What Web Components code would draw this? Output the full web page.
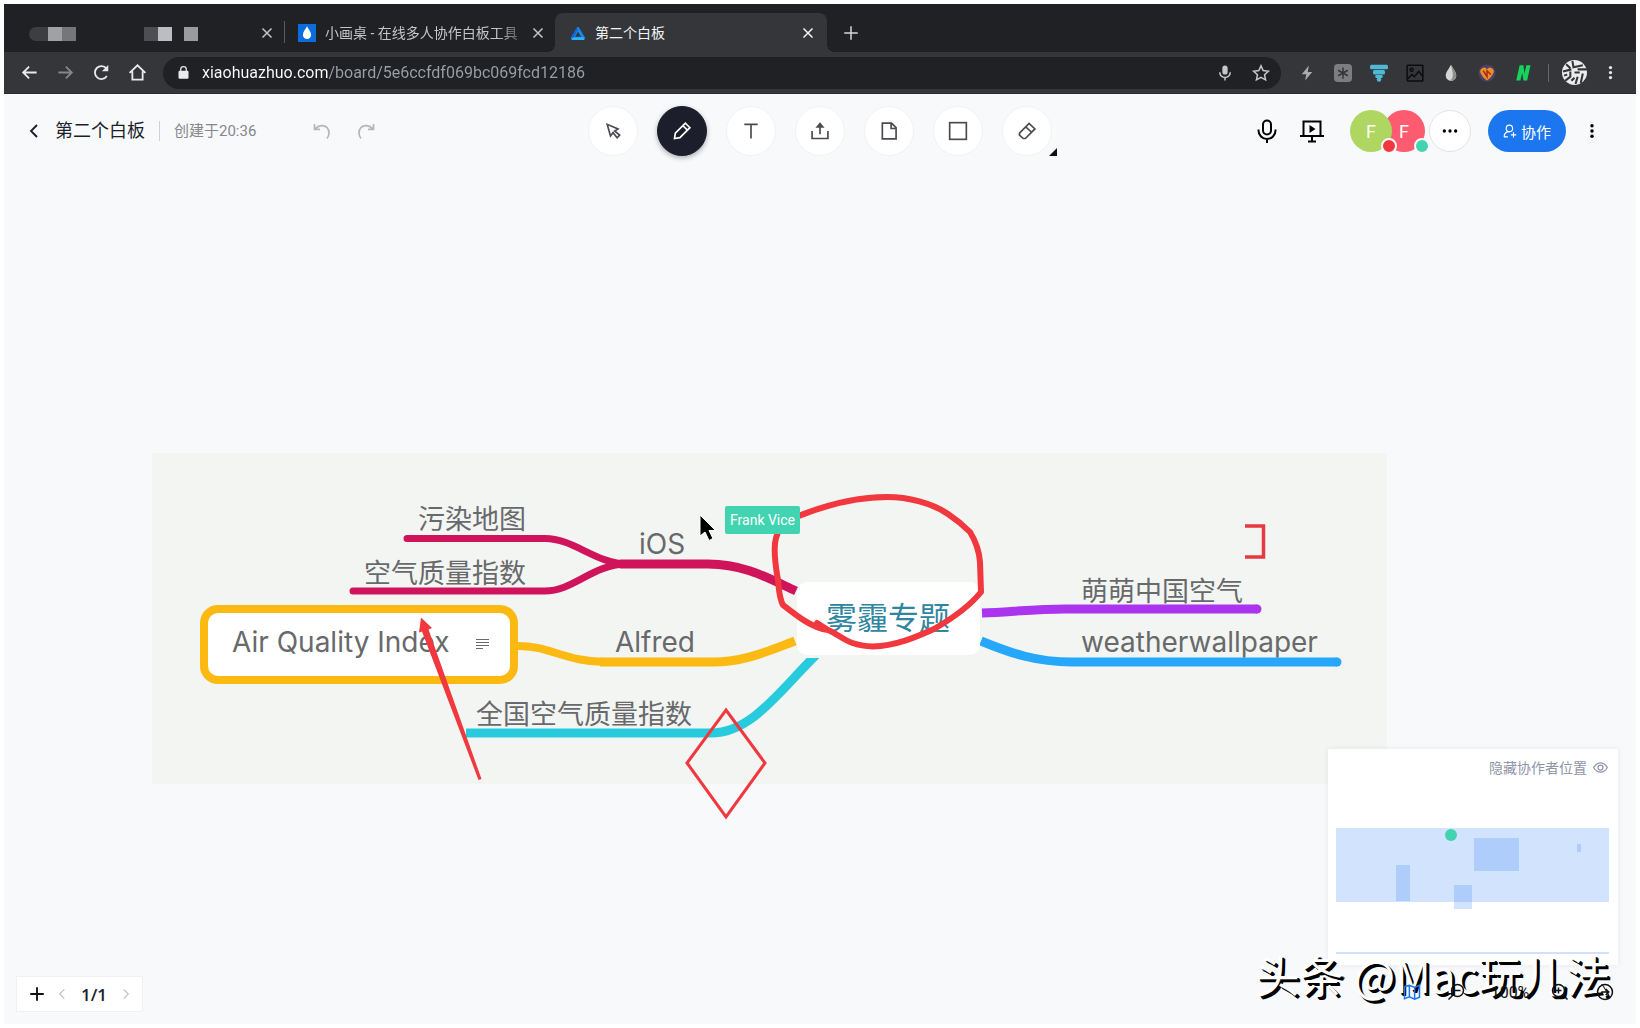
<!DOCTYPE html>
<html lang="zh-CN">
<head>
<meta charset="utf-8">
<title>第二个白板</title>
<style>
  html, body { margin: 0; background: #fff; }
  body { font-family: Roboto, "Noto Sans CJK SC", sans-serif; color: #1c1f2b; }
</style>
</head>
<body>
<browser-window></browser-window>

<script>
const RESET = `
  :host, *, *::before, *::after { box-sizing: border-box; }
  button { font: inherit; color: inherit; background: none; border: 0; padding: 0; margin: 0;
    display: inline-flex; align-items: center; justify-content: center; cursor: pointer; }
`;

function define(name, html, setup) {
  const template = document.createElement('template');
  template.innerHTML = html;
  customElements.define(name, class extends HTMLElement {
    connectedCallback() {
      if (this.shadowRoot) return;
      const root = this.attachShadow({ mode: 'open' });
      root.append(template.content.cloneNode(true));
      if (setup) setup(this, root);
    }
  });
}

/* Icons: 24-unit box, stroked with currentColor unless a shape says otherwise */
const ICONS = {
  close: '<path d="M6 6l12 12M18 6L6 18"/>',
  plus: '<path d="M12 3v18M3 12h18"/>',
  back: '<path d="M21 12H4M11.500 4.500L4 12l7.500 7.500"/>',
  forward: '<path d="M3 12h17M12.500 4.500L20 12l-7.500 7.500"/>',
  reload: '<path d="M18.800 16.500a8.200 8.200 0 1 1-.6-9.700"/><path d="M20.500 2.500v8h-8z" fill="currentColor" stroke="none"/>',
  home: '<path d="M2 12.500L12 3l10 9.500M5.500 10.500V21h13V10.500"/>',
  lock: '<rect x="4" y="9" width="16" height="13" rx="2" fill="currentColor" stroke="none"/><path d="M7.500 10V7a4.500 4.500 0 0 1 9 0v3"/>',
  micsmall: '<rect x="8.500" y="2" width="7" height="12" rx="3.500" fill="currentColor" stroke="none"/><path d="M5 11a7 7 0 0 0 14 0M12 18v4"/>',
  star: '<path d="M12 2.500l2.900 6.300 6.900.8-5.100 4.700 1.400 6.800-6.100-3.400-6.100 3.400 1.400-6.800-5.100-4.700 6.900-.8z"/>',
  bolt: '<path d="M14.500 2L5 13.500h6L9.500 22 19 10.500h-6z" fill="currentColor" stroke="none"/>',
  asterisk: '<rect width="24" height="24" rx="5" fill="#7d7d7f" stroke="none"/><path d="M12 4.500v15M5.500 8.300l13 7.400M18.500 8.300l-13 7.400" stroke="#35363a"/>',
  funnel: '<g stroke="none" fill="#4fb9d3"><rect x="0" y="1" width="24" height="6" rx="2"/><rect x="4" y="8" width="16" height="6" rx="2"/><rect x="7" y="14.500" width="10" height="4" rx="1.500"/><circle cx="12" cy="20.500" r="3"/></g>',
  picture: '<g stroke="#0c0c0d"><rect x="1.500" y="1.500" width="21" height="21" rx="1"/><circle cx="7.500" cy="7.500" r="2"/><path d="M2 20l6-6 3 3 6-7 5 6"/></g>',
  drop: '<path d="M12 1c3 6 7 9.500 7 14.500a7 7 0 0 1-14 0C5 10.500 9 7 12 1z" fill="#d4d4d4" stroke="none"/><path d="M12 1c3 6 7 9.500 7 14.500a7 7 0 0 1-9 6.600c6-2 5-9 2-21.100z" fill="#8d8d8d" stroke="none"/>',
  gem: '<circle cx="12" cy="12" r="11.500" fill="#49406b" stroke="none"/><path d="M7 5q3-1 5 2 2-3 5-2 5 2 4 6-2 6-9 11Q5 17 3 11 2 7 7 5z" fill="#f08a2c" stroke="none"/><path d="M7 9l5 8V9l5 5" stroke="#9c3210"/>',
  letter: '<path d="M3 22L7.500 1.500h5l1.500 11 2.500-11H22L17.500 22h-5L11 11.500 8.500 22z" fill="#17d35b" stroke="none"/>',
  face: '<circle cx="12" cy="12" r="12" fill="#ececec" stroke="none"/><g stroke="#35363a" stroke-width="2"><path d="M4 4l4 4M1 11l8-2M10 1l1 6 9-2M15 9h9M8 11v5l-5 4M2 15l3-1M12 12h5M20 13l-2 9M15 16l-2 7M9 20l3-3"/></g>',
  kebab: '<g fill="currentColor" stroke="none"><circle cx="12" cy="4" r="2.600"/><circle cx="12" cy="12" r="2.600"/><circle cx="12" cy="20" r="2.600"/></g>',
  ellipsis: '<g fill="currentColor" stroke="none"><circle cx="3.500" cy="12" r="2.500"/><circle cx="12" cy="12" r="2.500"/><circle cx="20.500" cy="12" r="2.500"/></g>',
  dropapp: '<rect width="24" height="24" fill="#0b6ddb" stroke="none"/><path d="M12 3c2 4 5.500 7.500 5.500 11.500a5.500 5.500 0 0 1-11 0C6.500 10.500 10 7 12 3z" fill="#fff" stroke="none"/>',
  delta: '<path d="M12 5.500L3.500 20h17z" stroke="#1787ee" stroke-width="4.500" stroke-linejoin="round"/><path d="M3 20.500h18" stroke="#28b5f0" stroke-width="4"/><path d="M10.500 5.500L3 19" stroke="#155ed8" stroke-width="3"/>',
  chevleft: '<path d="M16 4l-8 8 8 8"/>',
  chevright: '<path d="M8 4l8 8-8 8"/>',
  undo: '<path d="M3 3.500v6.500h6.500M3.500 9.500c5-5 11-5 14.500-1.500 3.500 3.500 3 9 0 13"/>',
  redo: '<path d="M21 3.500v6.500h-6.500M20.500 9.500c-5-5-11-5-14.500-1.500C2.500 11.500 3 17 6 21"/>',
  pointer: '<path d="M5 4l4 14 3-4 5 6 3-3-6-5 4-2.500z"/>',
  pencil: '<path d="M3 21l1-6.500L16 2.500l5.500 5.500-12 12zM13 5.500l5.500 5.500"/>',
  text: '<path d="M4 4h16M12 4v17"/>',
  upload: '<path d="M2.500 12v9h19v-9M12 16V5"/><path d="M12 1.500l5.500 6.500h-11z" fill="currentColor" stroke="none"/>',
  file: '<path d="M4 2.500h11l5.500 5.500v13.500H4zM14.500 3v6h6"/>',
  square: '<rect x="2" y="2" width="20" height="20"/>',
  eraser: '<path d="M3 14.500L14.500 3l7 6.500L10 21H7.500L3 17zM10.500 7l7 6.500"/>',
  mic: '<rect x="8" y="1.500" width="8" height="14" rx="4"/><path d="M3.500 10.500v1a8.500 8.500 0 0 0 17 0v-1M12 20v4"/>',
  present: '<path d="M3.500 17V2.500h17V17M0 17h24M12 17v5M8 22.500h8"/><path d="M9.500 6v8l6-4z" fill="currentColor" stroke="none"/>',
  person: '<circle cx="11" cy="7.500" r="5.500"/><path d="M2 22c0-6 4-9 9-9M18 14v9M13.500 18.500h9M1.500 22h7"/>',
  eye: '<path d="M1 12c3-5 7-7.500 11-7.500S20 7 23 12c-3 5-7 7.500-11 7.500S4 17 1 12z"/><circle cx="12" cy="12" r="4"/>',
  map: '<path d="M2 5l6.500-2 7 3L22 3v16l-6.500 2.500-7-3L2 21zM8.500 3v15.500M15.500 6v15"/>',
  zoomout: '<circle cx="14" cy="10" r="8"/><path d="M8 16l-6 6M10 10h8"/>',
  zoomin: '<circle cx="10" cy="10" r="8"/><path d="M16 16l6 6M6 10h8M10 6v8"/>',
  help: '<circle cx="12" cy="12" r="10"/><path d="M7 12h10M13 8l4 4-4 4"/>'
};

define('ui-icon', `
  <style>
    :host { display: inline-flex; flex: none; width: var(--size, 16px); height: var(--size, 16px); }
    svg { width: 100%; height: 100%; overflow: visible; fill: none; stroke: currentColor;
      stroke-width: var(--weight, 2); }
  </style>
  <svg viewBox="0 0 24 24" aria-hidden="true"></svg>`,
  (host, root) => { root.querySelector('svg').innerHTML = ICONS[host.getAttribute('name')] || ''; });

/* Browser chrome */
define('browser-tab', `
  <style>${RESET}
    :host { display: flex; align-items: center; gap: 9px; height: 39px; padding: 0 8px 0 13px;
      font-size: 14px; color: #c3c5c9; position: relative; }
    :host([active]) { background: #35363a; color: #f1f3f4; border-radius: 8px 8px 0 0; padding: 0 10px 0 15px; }
    :host([active])::before, :host([active])::after { content: ""; position: absolute; bottom: 0; width: 8px; height: 8px; }
    :host([active])::before { left: -8px; background: radial-gradient(circle at 0 0, transparent 8px, #35363a 8px); }
    :host([active])::after { right: -8px; background: radial-gradient(circle at 100% 0, transparent 8px, #35363a 8px); }
    :host([faded]) .label { mask-image: linear-gradient(90deg, #000 88%, rgba(0,0,0,.35)); }
    .label { flex: 1; white-space: nowrap; overflow: hidden; line-height: 20px; }
    button { width: 18px; height: 18px; }
    button ui-icon { --size: 18px; }
  </style>
  <slot name="icon"></slot>
  <span class="label"><slot></slot></span>
  <button aria-label="关闭标签页"><ui-icon name="close"></ui-icon></button>`);

define('tab-strip', `
  <style>${RESET}
    :host { display: flex; align-items: flex-end; height: 48px; background: #202124; }
    .first { width: 280px; }
    .second { width: 270px; }
    .third { width: 272px; }
    .rule { width: 1px; height: 22px; background: #5a5b5f; margin-bottom: 9px; }
    .mosaic { display: flex; height: 16px; padding: 2px 0 0 12px; }
    .mosaic i { width: 14px; }
    .mosaic .gap { width: 12px; }
    .new { width: 48px; height: 39px; color: #d5d6d9; }
    .new ui-icon { --size: 18px; }
    .app { --size: 18px; }
    .delta { --size: 16px; }
  </style>
  <browser-tab class="first">
    <span class="mosaic" aria-hidden="true">
      <i style="background:#3d3e42;border-radius:7px 0 0 7px;width:19px"></i><i style="background:#a0a1a5"></i><i style="background:#75767a"></i><i style="width:68px"></i><i style="background:#4d4e52"></i><i style="background:#bcbdc2"></i><i class="gap"></i><i style="background:#9a9b9f"></i>
    </span>
  </browser-tab>
  <span class="rule"></span>
  <browser-tab class="second" faded><ui-icon slot="icon" class="app" name="dropapp"></ui-icon>小画桌 - 在线多人协作白板工具</browser-tab>
  <browser-tab class="third" active><ui-icon slot="icon" class="delta" name="delta"></ui-icon>第二个白板</browser-tab>
  <button class="new" aria-label="新标签页"><ui-icon name="plus"></ui-icon></button>`);

define('address-bar', `
  <style>${RESET}
    :host { display: flex; align-items: center; height: 42px; padding: 0 8px 0 7px; background: #35363a;
      color: #e8eaed; border-bottom: 1px solid #2b2c2f; }
    .nav button { width: 36px; height: 36px; }
    .nav { display: flex; --size: 19px; --weight: 2.3; }
    .off { color: #85868a; }
    .box { flex: 1; display: flex; align-items: center; gap: 11px; height: 32px; margin-left: 8px; padding: 0 8px 0 13px;
      border-radius: 16px; background: #202124; }
    .box ui-icon { --size: 15px; }
    .box button ui-icon { --size: 18px; }
    .box button { width: 25px; color: #c6c7ca; }
    input { flex: 1; min-width: 0; border: 0; padding: 0; outline: 0; font: 16px/24px Roboto, sans-serif;
      color: transparent; background: linear-gradient(90deg, #fff 126px, #9aa0a6 126px);
      -webkit-background-clip: text; background-clip: text; }
    .ext { display: flex; align-items: center; margin-left: 8px; --size: 18px; color: #a9aaad; }
    .ext button { width: 36px; height: 32px; }
    .ext .rule { width: 1px; height: 18px; margin: 0 7px; background: #66676b; }
    .ext .me { --size: 25px; }
    .ext .more { color: #e8eaed; --size: 15px; }
  </style>
  <div class="nav">
    <button aria-label="后退"><ui-icon name="back"></ui-icon></button>
    <button aria-label="前进" class="off"><ui-icon name="forward"></ui-icon></button>
    <button aria-label="刷新"><ui-icon name="reload"></ui-icon></button>
    <button aria-label="主页"><ui-icon name="home"></ui-icon></button>
  </div>
  <div class="box">
    <ui-icon name="lock"></ui-icon>
    <input aria-label="地址" value="xiaohuazhuo.com/board/5e6ccfdf069bc069fcd12186">
    <button aria-label="麦克风"><ui-icon name="micsmall"></ui-icon></button>
    <button aria-label="收藏"><ui-icon name="star"></ui-icon></button>
  </div>
  <div class="ext">
    <button aria-label="闪电"><ui-icon name="bolt"></ui-icon></button>
    <button aria-label="星号"><ui-icon name="asterisk"></ui-icon></button>
    <button aria-label="漏斗"><ui-icon name="funnel"></ui-icon></button>
    <button aria-label="图片"><ui-icon name="picture"></ui-icon></button>
    <button aria-label="水滴"><ui-icon name="drop"></ui-icon></button>
    <button aria-label="宝石"><ui-icon name="gem"></ui-icon></button>
    <button aria-label="笔记"><ui-icon name="letter"></ui-icon></button>
    <span class="rule"></span>
    <button aria-label="账户" class="me"><ui-icon name="face"></ui-icon></button>
    <button aria-label="菜单" class="more"><ui-icon name="kebab"></ui-icon></button>
  </div>`);

/* Whiteboard header */
define('tool-button', `
  <style>${RESET}
    :host { display: block; }
    button { width: 50px; height: 50px; border-radius: 50%; background: #fff; border: 1px solid #f1f2f4; color: #4a4b50; }
    :host([active]) button { background: #1c1f2b; border-color: #1c1f2b; color: #fff; box-shadow: 0 2px 5px rgba(28,31,43,.35); }
  </style>
  <button><ui-icon></ui-icon></button>`,
  (host, root) => {
    root.querySelector('button').setAttribute('aria-label', host.getAttribute('label'));
    const old = root.querySelector('ui-icon'), icon = document.createElement('ui-icon');
    icon.setAttribute('name', host.getAttribute('icon'));
    old.replaceWith(icon);
  });

define('user-avatar', `
  <style>
    :host { display: flex; align-items: center; justify-content: center; width: 42px; height: 42px; border-radius: 50%;
      background: var(--fill); color: #fff; font-size: 18px; position: relative; }
    i { position: absolute; right: -5px; bottom: -2px; width: 12px; height: 12px; border: 2px solid #f8f9fb;
      border-radius: 50%; background: var(--dot); }
  </style>
  <slot></slot><i></i>`);

define('board-header', `
  <style>${RESET}
    :host { display: grid; grid-template-columns: 1fr auto 1fr; align-items: center; height: 74px;
      padding: 0 36px 0 20px; position: relative; z-index: 2; }
    .left, .tools, .right { display: flex; align-items: center; }
    .left button { height: 32px; }
    .chev { width: 20px; margin-right: 11px; --size: 18px; --weight: 2.5; }
    h1 { margin: 0; font-size: 18px; font-weight: 400; line-height: 26px; }
    .rule { width: 1px; height: 20px; margin: 0 14px; background: #cfd1d5; }
    time { font-size: 15px; line-height: 22px; color: #85878d; }
    .undo { width: 20px; margin-left: 56px; color: #b4b6ba; }
    .redo { width: 20px; margin-left: 24px; color: #b4b6ba; }
    .undo ui-icon, .redo ui-icon { --size: 20px; }
    .tools { gap: 19px; margin-left: 16px; --size: 20px; position: relative; }
    .corner { position: absolute; right: -5px; bottom: 0; border: 4px solid #111; border-left-color: transparent; border-top-color: transparent; }
    .right { justify-content: flex-end; }
    .media { width: 32px; height: 32px; --size: 24px; color: #000; }
    .media + .media { margin-left: 13px; }
    user-avatar:first-of-type { margin-left: 22px; z-index: 1; }
    user-avatar + user-avatar { margin-left: -9px; }
    .others { width: 42px; height: 42px; margin-left: 4px; border-radius: 50%; background: #fff; border: 1px solid #e2e3e6; color: #000; }
    .share { height: 42px; padding: 0 15px; gap: 4px; margin-left: 17px; border-radius: 21px; background: #1b76f0; color: #fff; font-size: 15px; }
    .share ui-icon { --size: 14px; }
    .more { width: 16px; height: 32px; margin-left: 18px; color: #000; }
  </style>
  <div class="left">
    <button class="chev" aria-label="返回"><ui-icon name="chevleft"></ui-icon></button>
    <h1>第二个白板</h1><span class="rule"></span><time>创建于20:36</time>
    <button class="undo" aria-label="撤销"><ui-icon name="undo"></ui-icon></button>
    <button class="redo" aria-label="重做"><ui-icon name="redo"></ui-icon></button>
  </div>
  <div class="tools">
    <tool-button icon="pointer" label="选择"></tool-button>
    <tool-button icon="pencil" label="画笔" active></tool-button>
    <tool-button icon="text" label="文本"></tool-button>
    <tool-button icon="upload" label="上传"></tool-button>
    <tool-button icon="file" label="便签"></tool-button>
    <tool-button icon="square" label="形状"></tool-button>
    <tool-button icon="eraser" label="橡皮"></tool-button>
    <span class="corner"></span>
  </div>
  <div class="right">
    <button class="media" aria-label="语音"><ui-icon name="mic"></ui-icon></button>
    <button class="media" aria-label="演示"><ui-icon name="present"></ui-icon></button>
    <user-avatar style="--fill:#aed660;--dot:#f0383e">F</user-avatar>
    <user-avatar style="--fill:#fc5b70;--dot:#42d3b0">F</user-avatar>
    <button class="others" aria-label="更多成员"><ui-icon name="ellipsis"></ui-icon></button>
    <button class="share"><ui-icon name="person"></ui-icon>协作</button>
    <button class="more" aria-label="更多"><ui-icon name="kebab"></ui-icon></button>
  </div>`);

/* Canvas: a free surface with the mind map and the strokes drawn over it */
define('mind-label', `
  <style>
    :host { position: absolute; white-space: nowrap; color: #68696b; font-size: 27px; line-height: 32px; }
    :host([latin]) { font-family: Inter, sans-serif; font-size: 28px; font-weight: 400; }
    :host([root]) { font-size: 31px; color: #2e86a0; }
  </style>
  <slot></slot>`);

define('board-canvas', `
  <style>${RESET}
    :host { position: absolute; inset: 0; overflow: hidden; }
    svg { position: absolute; left: 0; top: 0; width: 1px; height: 1px; overflow: visible; fill: none; }
    .tag { position: absolute; left: 721px; top: 412px; padding: 0 5px; border-radius: 2px; background: #42d3b0;
      color: #fff; font-size: 14px; line-height: 28px; }
  </style>
  <svg aria-hidden="true"><g transform="translate(-4 -94)">
    <rect x="152" y="453" width="1235" height="331" fill="#f3f5f3"/>
    <g stroke="#d0145c">
      <path d="M407 538.500H545C574 538.500 596 564 628 564M353 591H545C574 591 592 564 628 564" stroke-width="7" stroke-linecap="round"/>
      <path d="M620 564H708C744 564 768 578 796 591" stroke-width="9"/>
    </g>
    <g stroke="#fcb912">
      <path d="M516 646C548 645 566 662 606 662" stroke-width="8"/>
      <path d="M600 662H713C744 662 768 651 795 641" stroke-width="9"/>
      <rect x="204" y="609" width="310" height="71" rx="14" stroke-width="8" fill="#fff"/>
    </g>
    <path d="M466 733H711C752 733 780 690 817 654" stroke="#28cbdd" stroke-width="9"/>
    <rect x="797" y="650" width="183" height="8" fill="#f3f5f3"/>
    <path d="M982 613C1010 612 1035 609 1066 609H1257" stroke="#ab35ee" stroke-width="9"/>
    <circle cx="1257" cy="609" r="4.500" fill="#ab35ee"/>
    <path d="M981 641C1010 653 1036 662 1072 662H1337" stroke="#27a7fc" stroke-width="9"/>
    <circle cx="1337" cy="662" r="4.500" fill="#27a7fc"/>
    <rect x="797" y="582" width="183" height="73" rx="10" fill="#fff"/>
    <path d="M476 639.500h13M476 642.500h13M476 645.500h13M476 648.500h7" stroke="#68696b"/>
  </g></svg>
  <mind-label style="left:414px;top:410px">污染地图</mind-label>
  <mind-label style="left:360px;top:464px">空气质量指数</mind-label>
  <mind-label latin style="left:635px;top:434px">iOS</mind-label>
  <mind-label latin style="left:228px;top:532px">Air Quality Index</mind-label>
  <mind-label latin style="left:611px;top:532px">Alfred</mind-label>
  <mind-label style="left:472px;top:605px">全国空气质量指数</mind-label>
  <mind-label style="left:1077px;top:482px">萌萌中国空气</mind-label>
  <mind-label latin style="left:1077px;top:532px">weatherwallpaper</mind-label>
  <mind-label root style="left:822px;top:509px">雾霾专题</mind-label>
  <svg aria-hidden="true"><g transform="translate(-4 -94)" stroke="#f0383e">
    <path d="M796 517C828 504 856 497 887 497C908 497 932 503 948 514C957 520 964 526 970 532C975 540 979 550 980 562L981 592C969 607 953 618 934 629C914 638 895 646 873 646.500C848 646 842 636 828 630L817 623M828 630C812 628 797 616 783 605C779 598 779 589 778 580C775 563 773 548 776 538L780 526" stroke-width="6" stroke-linecap="round" stroke-linejoin="round"/>
    <path d="M421 617.500L432 628L428.500 629.500L481.500 779L478.500 780L422 631.500L419 632.500Z" fill="#f0383e" stroke="none"/>
    <path d="M726 710L765 763L726 817L687 763Z" stroke-width="3"/>
    <path d="M1245 526H1263.500V557H1245" stroke="#e53a42" stroke-width="3.500"/>
    <path d="M700 515V536L705 532L709 540.500L713 538.500L709 530.500H715.500Z" fill="#000" stroke="#fff" stroke-width="1"/>
  </g></svg>
  <span class="tag">Frank Vice</span>`);

/* Panels over the canvas */
define('mini-map', `
  <style>${RESET}
    :host { display: flex; flex-direction: column; width: 290px; height: 216px; padding: 8px; background: #fff;
      box-shadow: 0 0 6px rgba(30,35,50,.08); }
    button { align-self: flex-end; gap: 6px; height: 20px; padding-right: 2px; font-size: 14px; color: #8f94a8; }
    button ui-icon { --size: 15px; }
    svg { display: block; width: 100%; height: 126px; margin-top: 51px; }
  </style>
  <button>隐藏协作者位置<ui-icon name="eye"></ui-icon></button>
  <svg viewBox="1336 828 274 126" aria-hidden="true">
    <rect x="1336" y="828" width="273" height="74" fill="#d2e3fd"/>
    <g fill="#aecdfa"><rect x="1474" y="838" width="45" height="33"/><rect x="1396" y="865" width="14" height="36"/><rect x="1454" y="885" width="18" height="17"/></g>
    <rect x="1454" y="902" width="18" height="7" fill="#d2e3fd"/>
    <rect x="1577" y="844" width="4" height="8" rx="1" fill="#aecdfa"/>
    <circle cx="1451" cy="835" r="6" fill="#42d3b0"/>
    <rect x="1336" y="952" width="273" height="2" fill="#d2e0fa"/>
  </svg>`);

define('page-switcher', `
  <style>${RESET}
    :host { display: flex; align-items: center; height: 36px; padding: 0 6px 0 10px; background: #fff; border: 1px solid #f0f1f3; }
    button { width: 20px; height: 24px; color: #bfc1c5; --size: 14px; }
    .add { color: #111; --size: 18px; --weight: 2.5; margin-right: 5px; }
    span { font-family: "Open Sans", sans-serif; font-size: 17px; font-weight: 600; min-width: 44px; text-align: center; }
  </style>
  <button class="add" aria-label="新建页面"><ui-icon name="plus"></ui-icon></button>
  <button aria-label="上一页"><ui-icon name="chevleft"></ui-icon></button>
  <span>1/1</span>
  <button aria-label="下一页"><ui-icon name="chevright"></ui-icon></button>`);

define('zoom-bar', `
  <style>${RESET}
    :host { display: flex; align-items: center; height: 54px; padding-right: 3px; color: #111; --size: 18px; }
    button { height: 24px; width: 20px; }
    .map { color: #1b76f0; margin-right: 24px; }
    .value { width: 48px; margin: 0 16px 0 20px; font-size: 16px; }
    .help { margin-left: 25px; }
  </style>
  <button class="map" aria-label="小地图"><ui-icon name="map"></ui-icon></button>
  <button aria-label="缩小"><ui-icon name="zoomout"></ui-icon></button>
  <button class="value">100%</button>
  <button aria-label="放大"><ui-icon name="zoomin"></ui-icon></button>
  <button class="help" aria-label="帮助"><ui-icon name="help"></ui-icon></button>`);

define('white-board', `
  <style>
    :host { display: flex; flex-direction: column; flex: 1; position: relative; background: #f8f9fb; }
    .dock { display: flex; align-items: flex-end; justify-content: space-between; margin-top: auto;
      padding: 0 18px 5px 12px; }
    page-switcher { margin-bottom: 7px; position: relative; z-index: 1; }
    .side { display: flex; flex-direction: column; align-items: flex-end; }
    mini-map { position: relative; z-index: 1; }
    zoom-bar { position: relative; z-index: 4; }
    .mark { position: absolute; right: 26px; bottom: 20px; z-index: 3; color: #fff; pointer-events: none; white-space: nowrap;
      font: 44px/60px "Noto Sans CJK SC", sans-serif; text-shadow: 2px 2px 0 #000, 3px 3px 0 #000; }
  </style>
  <board-canvas></board-canvas>
  <board-header></board-header>
  <div class="dock">
    <page-switcher></page-switcher>
    <div class="side"><mini-map></mini-map><zoom-bar></zoom-bar></div>
  </div>
  <div class="mark">头条 @Mac玩儿法</div>`);

define('browser-window', `
  <style>
    :host { display: flex; flex-direction: column; box-sizing: border-box; min-height: 100vh; padding: 4px; }
  </style>
  <tab-strip></tab-strip>
  <address-bar></address-bar>
  <white-board></white-board>`);
</script>
</body>
</html>
